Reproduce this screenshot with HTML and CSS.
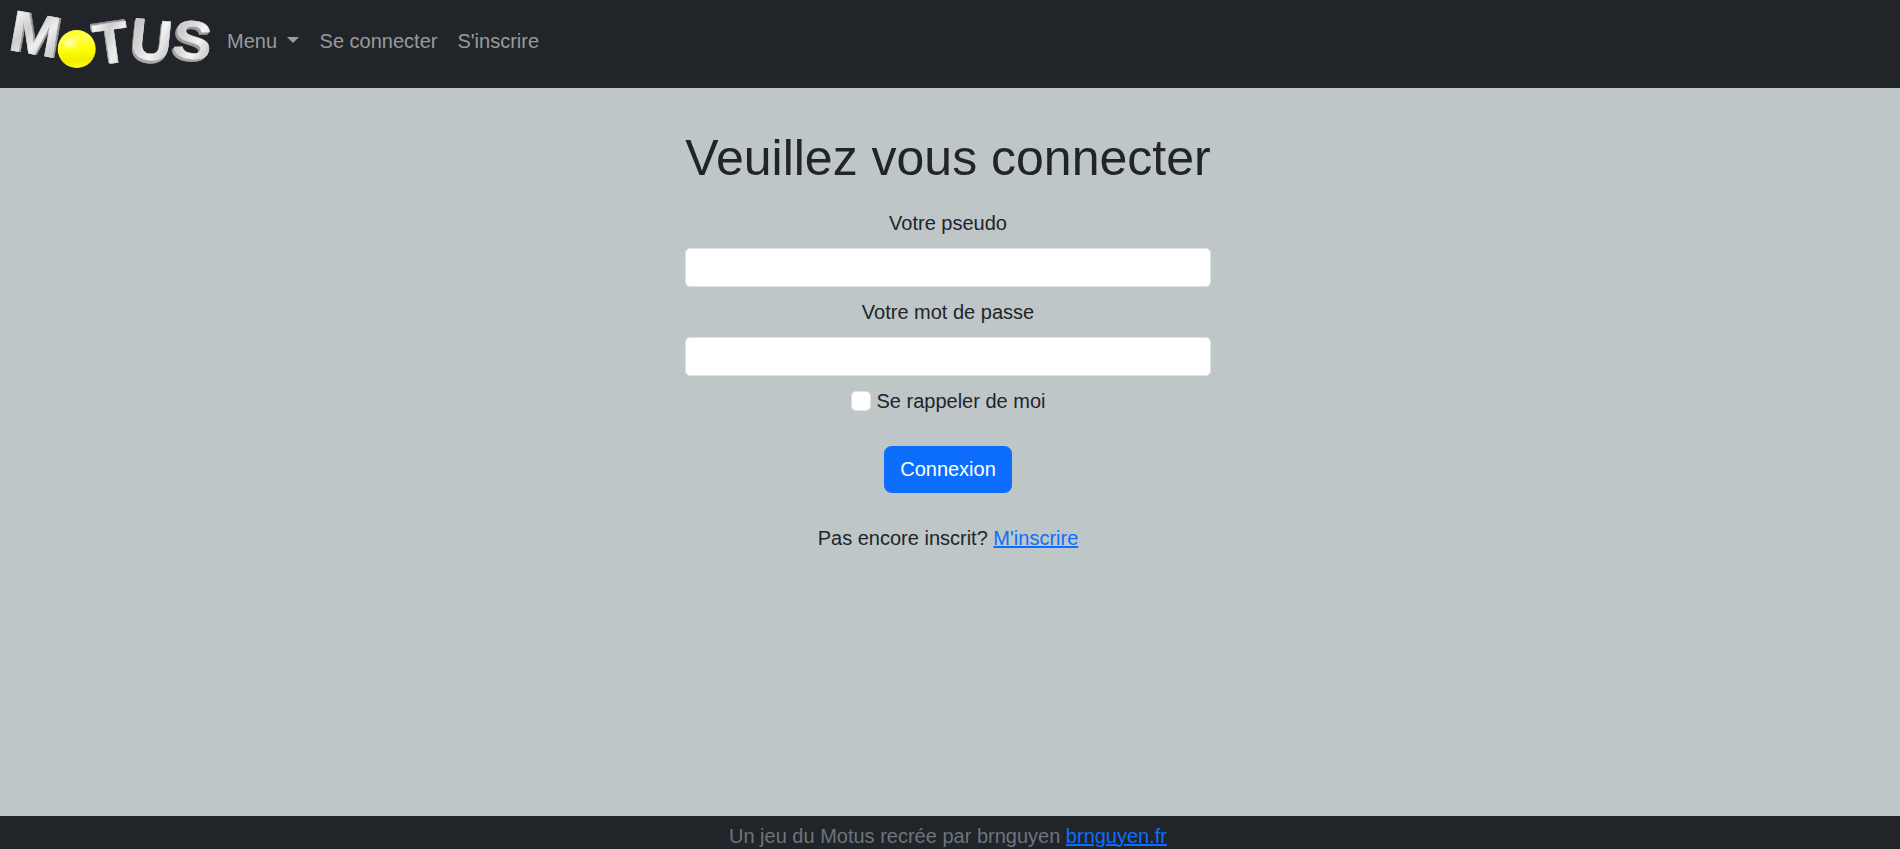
FILE: index.html
```
<!DOCTYPE html>
<html lang="fr">
<head>
  <meta charset="UTF-8">
  <title>Motus - Connexion</title>
  <link rel="stylesheet" href="styles.css">
</head>
<body>
  <nav class="navbar">
    <a class="navbar-brand" href="#">
      <svg class="logo" width="206" height="66" viewBox="8 4 206 66">
        <defs>
          <linearGradient id="metal" x1="0" y1="0" x2="1" y2="1">
            <stop offset="0.1" stop-color="#fafafa"/>
            <stop offset="0.4" stop-color="#cdcdcd"/>
            <stop offset="0.6" stop-color="#efefef"/>
            <stop offset="0.9" stop-color="#c0c0c0"/>
          </linearGradient>
          <linearGradient id="bowl" x1="0" y1="0" x2="1" y2="0.6">
            <stop offset="0.1" stop-color="#bdbdbd"/>
            <stop offset="0.45" stop-color="#d8d8d8"/>
            <stop offset="0.7" stop-color="#f4f4f4"/>
            <stop offset="1" stop-color="#c8c8c8"/>
          </linearGradient>
          <linearGradient id="side" x1="0" y1="0" x2="0" y2="1">
            <stop offset="0.2" stop-color="#929292"/>
            <stop offset="0.8" stop-color="#adadad"/>
          </linearGradient>
          <linearGradient id="ball" x1="0.4" y1="0" x2="0.5" y2="1">
            <stop offset="0" stop-color="#ffff20"/>
            <stop offset="0.25" stop-color="#ffff50"/>
            <stop offset="0.5" stop-color="#ffff08"/>
            <stop offset="0.8" stop-color="#f3ec00"/>
            <stop offset="1" stop-color="#ffff18"/>
          </linearGradient>
          <radialGradient id="shine">
            <stop offset="0" stop-color="#ffffb0"/>
            <stop offset="1" stop-color="#ffffb0" stop-opacity="0"/>
          </radialGradient>
        </defs>
        <g class="letter" transform="translate(7 49.5) rotate(10) scale(1.03 1)">
          <text class="side" x="2" y="0">M</text>
          <text class="side" x="1" y="0">M</text>
          <text class="face">M</text>
        </g>
        <g class="letter" transform="translate(96.5 65.5) rotate(-8)">
          <text class="side" x="-1" y="-2">T</text>
          <text class="side" x="-1" y="-1">T</text>
          <text class="face">T</text>
        </g>
        <g class="letter" transform="translate(128.5 57.5) rotate(6)">
          <text class="side" x="-1" y="3">U</text>
          <text class="side" x="0" y="1.5">U</text>
          <text class="face bowl">U</text>
        </g>
        <g class="letter" transform="translate(171.5 56.5) rotate(6) scale(1 0.93)">
          <text class="side" x="-2" y="3">S</text>
          <text class="side" x="-1" y="1.5">S</text>
          <text class="face bowl">S</text>
        </g>
        <circle cx="76.7" cy="49" r="19" fill="url(#ball)"/>
        <ellipse cx="70" cy="43" rx="9" ry="8" fill="url(#shine)"/>
      </svg>
    </a>
    <ul class="navbar-nav">
      <li><a class="nav-link dropdown-toggle" href="#">Menu </a></li>
      <li><a class="nav-link" href="#">Se connecter</a></li>
      <li><a class="nav-link" href="#">S'inscrire</a></li>
    </ul>
  </nav>

  <main class="content">
    <form class="login-form">
      <h1>Veuillez vous connecter</h1>
      <label class="form-label" for="username">Votre pseudo</label>
      <input class="form-control" type="text" id="username">
      <label class="form-label" for="password">Votre mot de passe</label>
      <input class="form-control" type="password" id="password">
      <div class="remember">
        <input class="form-check-input" type="checkbox" id="remember">
        <label for="remember">Se rappeler de moi</label>
      </div>
      <button class="btn" type="submit">Connexion</button>
      <p class="register">Pas encore inscrit? <a href="#">M'inscrire</a></p>
    </form>
  </main>

  <footer class="footer">
    Un jeu du Motus recrée par brnguyen <a href="#">brnguyen.fr</a>
  </footer>
</body>
</html>
```
FILE: styles.css
```
* {
  box-sizing: border-box;
}
body {
  margin: 0;
  height: 100vh;
  display: flex;
  flex-direction: column;
  font-family: "Liberation Sans", Arial, sans-serif;
  font-size: 20px;
  line-height: 1.5;
  color: #212529;
  background-color: #bec6c8;
}
a {
  color: #0d6efd;
}
.navbar {
  display: flex;
  align-items: flex-start;
  height: 88px;
  background-color: #212529;
}
.navbar-brand {
  padding: 4px 3px 0 8px;
}
.logo {
  display: block;
  overflow: visible;
}
.letter text {
  font-size: 58px;
  font-weight: bold;
}
.face {
  fill: url(#metal);
  stroke: #dcdcdc;
  stroke-width: 0.6;
}
.bowl {
  fill: url(#bowl);
}
.side {
  fill: url(#side);
  stroke: #9c9c9c;
  stroke-width: 0.6;
}
.navbar-nav {
  display: flex;
  margin: 0;
  padding: 16px 0 0;
  list-style: none;
}
.nav-link {
  display: block;
  padding: 10px;
  color: rgba(255, 255, 255, 0.55);
  text-decoration: none;
  white-space: pre;
}
.dropdown-toggle::after {
  content: "";
  display: inline-block;
  margin-left: 4px;
  margin-right: 1px;
  vertical-align: 5px;
  border-top: 6px solid;
  border-right: 6px solid transparent;
  border-left: 6px solid transparent;
}
.content {
  flex: 1;
  display: flex;
  justify-content: center;
  padding: 40px 4px 0 0;
}
.login-form {
  display: flex;
  flex-direction: column;
  align-items: center;
  width: 526px;
}
h1 {
  margin: 0 0 20px;
  font-size: 50px;
  font-weight: 400;
  line-height: 60px;
  white-space: nowrap;
}
.form-label {
  margin-bottom: 10px;
}
.form-control {
  width: 100%;
  height: 39px;
  margin-bottom: 10px;
  padding: 5px 10px;
  border: 1px solid #dee2e6;
  border-radius: 5px;
  background-color: #fff;
}
.remember {
  display: flex;
  align-items: center;
  gap: 6px;
  margin-bottom: 30px;
}
.form-check-input {
  appearance: none;
  width: 20px;
  height: 20px;
  margin: 0;
  border: 1px solid #dee2e6;
  border-radius: 5px;
  background-color: #fff;
}
.btn {
  height: 47px;
  padding: 6px 15px 8px;
  border: 1px solid #0d6efd;
  border-radius: 7.5px;
  font: inherit;
  color: #fff;
  background-color: #0d6efd;
}
.register {
  margin: 30px 0 0;
}
.footer {
  height: 33px;
  padding: 6px 4px 0 0;
  text-align: center;
  line-height: 28px;
  color: #6c757d;
  background-color: #212529;
}
```
